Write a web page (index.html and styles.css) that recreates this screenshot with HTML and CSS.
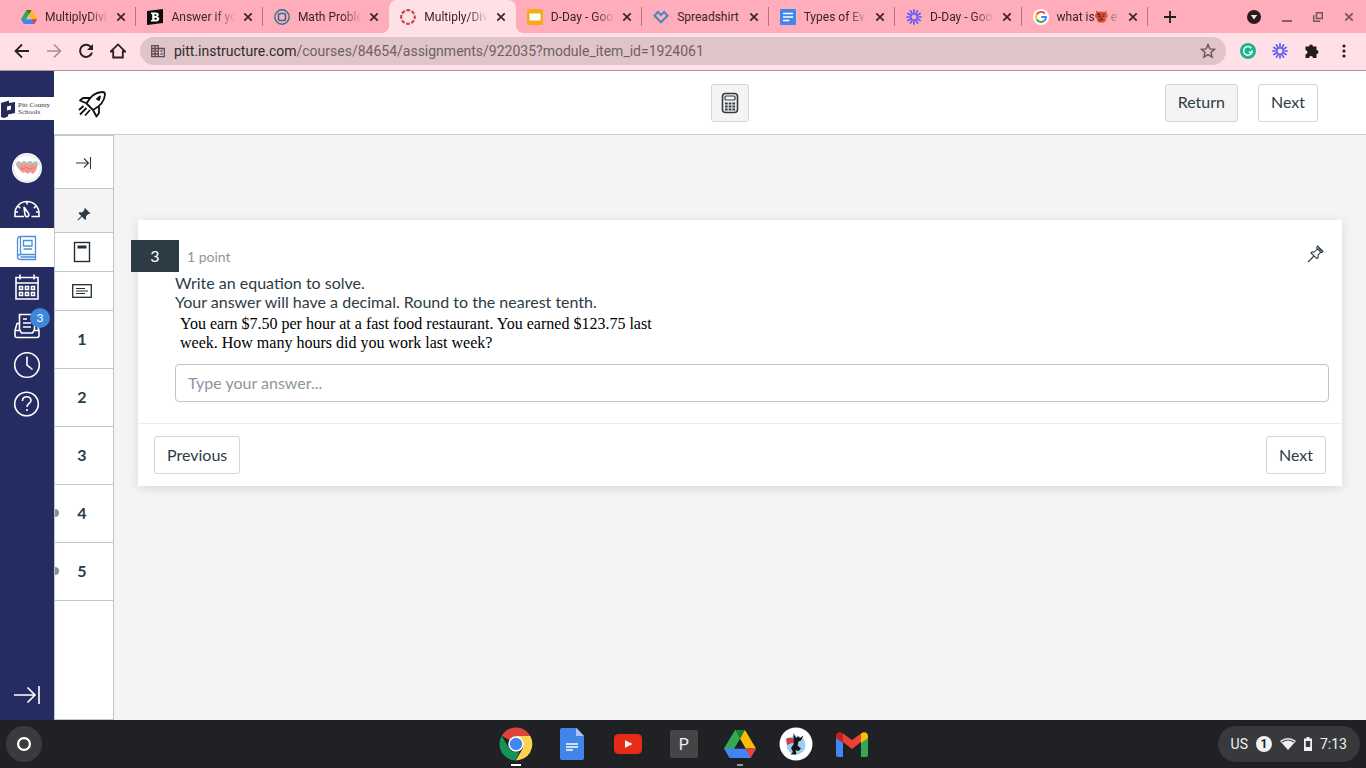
FILE: index.html
```html
<!DOCTYPE html>
<html lang="en">

<head>
    <meta charset="UTF-8">
    <meta name="viewport" content="width=device-width, initial-scale=1.0">
    <title>Multiply/Divide</title>
    <link rel="stylesheet" href="styles.css">
</head>

<body>

    <!-- shared shapes -->
    <svg class="defs" width="0" height="0" aria-hidden="true">
        <symbol id="close" viewBox="0 0 10 10"><path d="M1.3 1.3l7.4 7.4M8.7 1.3L1.3 8.7" stroke="currentColor" stroke-width="1.7"/></symbol>
        <symbol id="drive" viewBox="0 0 32 28">
            <path d="M11 0h10l-5 9-9.5 16.500L0 18.500z" fill="#34a853"/>
            <path d="M11 0h10l11 18.500H21.500z" fill="#fbbc04"/>
            <path d="M11 0h10l-5 9z" fill="#188038"/>
            <path d="M5.500 28l5-9.500H32L26.500 28z" fill="#4285f4"/>
            <path d="M0 18.500L5.500 28l5.200-9.500z" fill="#4285f4"/>
            <path d="M21.500 18.500H32L26.500 28z" fill="#ea4335"/>
            <path d="M16 9l5.500 9.500h-11z" fill="var(--hole)"/>
        </symbol>
        <symbol id="burst" viewBox="0 0 16 16">
            <g stroke="#6259f5" stroke-width="1.7" stroke-linecap="round">
                <path d="M8 .9v4M8 11.100v4M.9 8h4M11.100 8h4M4.450 1.850l2 3.460M9.550 10.690l2 3.460M1.850 4.450l3.460 2M10.690 9.550l3.460 2M1.850 11.550l3.460-2M10.690 6.450l3.460-2M4.450 14.150l2-3.460M9.550 5.310l2-3.460"/>
            </g>
        </symbol>
    </svg>

    <header class="browser">
        <div class="tab-strip">
            <div class="tabs">
                <div class="tab">
                    <svg class="favicon" viewBox="0 0 32 32"><use href="#drive" y="2" width="32" height="28"/></svg>
                    <span class="tab-title">MultiplyDivi</span>
                    <button class="tab-close" aria-label="Close tab"><svg><use href="#close"/></svg></button>
                </div>
                <div class="tab">
                    <svg class="favicon" viewBox="0 0 16 16"><path d="M0 2l16-2v14L0 16z" fill="#0b0b0b"/><path d="M4 3.500h5c3.400 0 3.600 3.600 1.200 4.100 3.100.6 2.700 4.900-.9 4.900H4v-1.600h1.200V5.100H4zm3.500 1.700v1.900h1c1.400 0 1.400-1.900 0-1.900zm0 3.500v2.100h1.200c1.500 0 1.500-2.100 0-2.100z" fill="#fff" fill-rule="evenodd"/></svg>
                    <span class="tab-title">Answer if yo</span>
                    <button class="tab-close" aria-label="Close tab"><svg><use href="#close"/></svg></button>
                </div>
                <div class="tab">
                    <svg class="favicon" viewBox="0 0 16 16" fill="none" stroke="#2f6f91"><circle cx="8" cy="8" r="7.2" stroke-width="1.4"/><rect x="4.5" y="4.5" width="7" height="7" rx="1.5" stroke-width="1.6"/></svg>
                    <span class="tab-title">Math Proble</span>
                    <button class="tab-close" aria-label="Close tab"><svg><use href="#close"/></svg></button>
                </div>
                <div class="tab active">
                    <svg class="favicon" viewBox="0 0 16 16"><circle cx="8" cy="8" r="6.8" fill="none" stroke="#c0464b" stroke-width="2.2" stroke-dasharray="3.8 1.54" stroke-dashoffset="1.9"/></svg>
                    <span class="tab-title">Multiply/Div</span>
                    <button class="tab-close" aria-label="Close tab"><svg><use href="#close"/></svg></button>
                </div>
                <div class="tab">
                    <svg class="favicon" viewBox="0 0 16 16"><rect width="16" height="16" rx="1.5" fill="#f5ab1b"/><rect x="2.5" y="4.5" width="11" height="7" fill="#fff"/></svg>
                    <span class="tab-title">D-Day - Goo</span>
                    <button class="tab-close" aria-label="Close tab"><svg><use href="#close"/></svg></button>
                </div>
                <div class="tab">
                    <svg class="favicon" viewBox="0 0 16 16"><path d="M8 13.300L1.500 6.800l3.400-3.900L8 6l3.100-3.100 3.400 3.900z" fill="none" stroke="#4a83bd" stroke-width="2"/></svg>
                    <span class="tab-title">Spreadshirt</span>
                    <button class="tab-close" aria-label="Close tab"><svg><use href="#close"/></svg></button>
                </div>
                <div class="tab">
                    <svg class="favicon" viewBox="0 0 16 16"><rect width="16" height="16" rx="1.5" fill="#4484ef"/><path d="M3 4.500h10M3 8h10M3 11.500h6.500" stroke="#fff" stroke-width="1.7"/></svg>
                    <span class="tab-title">Types of Ev</span>
                    <button class="tab-close" aria-label="Close tab"><svg><use href="#close"/></svg></button>
                </div>
                <div class="tab">
                    <svg class="favicon"><use href="#burst"/></svg>
                    <span class="tab-title">D-Day - Goo</span>
                    <button class="tab-close" aria-label="Close tab"><svg><use href="#close"/></svg></button>
                </div>
                <div class="tab">
                    <svg class="favicon" viewBox="0 0 16 16" fill="none" stroke-width="1.9"><circle cx="8" cy="8" r="8" fill="#fff"/><path d="M11.800 4.500A5 5 0 0 0 3.700 5.500" stroke="#ea4335"/><path d="M3.700 5.500a5 5 0 0 0 0 5" stroke="#fbbc05"/><path d="M3.700 10.500a5 5 0 0 0 7.500 1.300" stroke="#34a853"/><path d="M11.200 11.800A5 5 0 0 0 13 8H8.200" stroke="#4285f4"/></svg>
                    <span class="tab-title">what is<svg class="emoji" viewBox="0 0 14 14"><path d="M1 1l2.500 1h7L13 1l-.5 3 1.500 1v2.500L12.500 8l-1 4-2 1.500h-5l-2-1.500-1-4L0 7.500V5l1.500-1z" fill="#cf4a34"/><path d="M2.500 4l3 1.200M11.500 4l-3 1.200M4.500 10.500h5M3.800 6.800h1.800M8.400 6.800h1.800M6 8.500h2" stroke="#5c1a12" stroke-width="1.3"/></svg> e</span>
                    <button class="tab-close" aria-label="Close tab"><svg><use href="#close"/></svg></button>
                </div>
            </div>
            <div class="window-controls">
                <button aria-label="New tab"><svg width="12" height="12" viewBox="0 0 12 12"><path d="M6 0v12M0 6h12" stroke="#241c1e" stroke-width="1.8"/></svg></button>
                <div class="window-buttons">
                    <button aria-label="Search tabs"><svg width="14" height="14" viewBox="0 0 14 14"><circle cx="7" cy="7" r="7" fill="#2a1b1f"/><path d="M3.800 5h6.400L7 9.500z" fill="#ffdfe4"/></svg></button>
                    <button aria-label="Minimize"><svg width="10" height="10" viewBox="0 0 10 10"><path d="M0 9h10" stroke="#76565b" stroke-width="1.8"/></svg></button>
                    <button aria-label="Restore"><svg width="10" height="10" viewBox="0 0 10 10" fill="none" stroke="#76565b" stroke-width="1.5"><path d="M3.500.7h5.800v5.800H3.500zM.7 3v6.300H7"/></svg></button>
                    <button class="window-close" aria-label="Close window"><svg width="10" height="10"><use href="#close"/></svg></button>
                </div>
            </div>
        </div>
        <div class="toolbar">
            <div class="history">
                <button aria-label="Back"><svg width="16" height="16" viewBox="0 0 16 16" fill="none" stroke="#2a2023" stroke-width="1.8"><path d="M15 8H2M8 1.500L1.500 8 8 14.500"/></svg></button>
                <button aria-label="Forward"><svg width="16" height="16" viewBox="0 0 16 16" fill="none" stroke="#a58c92" stroke-width="1.6"><path d="M1 8h13M8 1.500L14.500 8 8 14.500"/></svg></button>
                <button aria-label="Reload"><svg width="16" height="16" viewBox="0 0 16 16"><path d="M13.300 4.500A6.100 6.100 0 1 0 14 9.500" fill="none" stroke="#2a2023" stroke-width="2"/><path d="M15 1v6H9z" fill="#2a2023"/></svg></button>
                <button aria-label="Home"><svg width="16" height="16" viewBox="0 0 16 16" fill="none" stroke="#2a2023" stroke-width="1.8"><path d="M.8 8.500L8 1.400l7.200 7.100h-2.400v6H3.200v-6z"/></svg></button>
            </div>
            <div class="address">
                <svg width="14" height="14" viewBox="0 0 14 14" fill="none" stroke="#5d4d51" stroke-width="1.3"><path d="M.7 1.700h6.600v11H.7zM7.300 4.500h6v8.200h-6M.7 4.500h6.600M.7 7.200h6.600M.7 10h6.600M4 1.700v11M9.500 7h2M9.500 10h2"/></svg>
                <label for="url">pitt.instructure.com</label><input id="url" type="text" value="/courses/84654/assignments/922035?module_item_id=1924061">
                <button aria-label="Bookmark this page"><svg width="16" height="16" viewBox="0 0 16 16"><path d="M8 1.500l1.900 4.400 4.700.4-3.600 3.100 1.100 4.700L8 11.600l-4.100 2.500L5 9.400 1.400 6.300l4.700-.4z" fill="none" stroke="#66555a" stroke-width="1.4"/></svg></button>
            </div>
            <div class="extensions">
                <button aria-label="Grammar checker"><svg width="16" height="16" viewBox="0 0 16 16"><circle cx="8" cy="8" r="8" fill="#1cb58b"/><path d="M11.300 5.200A4.300 4.300 0 1 0 12 9.300H8.800M12 7.200v2.600" fill="none" stroke="#fff" stroke-width="1.5"/></svg></button>
                <button aria-label="Screen recorder"><svg width="16" height="16"><use href="#burst"/></svg></button>
                <button aria-label="Extensions"><svg width="16" height="16" viewBox="0 0 16 16"><path d="M1.500 3.500H5a2 2 0 1 1 4 0h3.500V7a2 2 0 1 1 0 4v4H9a2 2 0 0 0-4 0H1.500v-3.800a2 2 0 0 0 0-4z" fill="#241c1e"/></svg></button>
                <button aria-label="Menu"><svg width="16" height="16" viewBox="0 0 16 16" fill="#241c1e"><circle cx="8" cy="3" r="1.6"/><circle cx="8" cy="8" r="1.6"/><circle cx="8" cy="13" r="1.6"/></svg></button>
            </div>
        </div>
    </header>

    <div class="app">
        <nav class="global-nav">
            <a class="school-logo" href="#">
                <svg width="16" height="18" viewBox="0 0 16 18"><path d="M1 3l8-2.500V3l6-1v11l-7 1.500v2L4 18l-3-1z" fill="#252b52"/><path d="M7 6.500l4-1v4l-4 1z" fill="#fff"/></svg>
                <span>Pitt County<br>Schools</span>
            </a>
            <a class="avatar-link" href="#" aria-label="Account">
                <svg width="32" height="32" viewBox="0 0 32 32"><circle cx="16" cy="16" r="15" fill="#fff"/><circle cx="16" cy="16" r="13.5" fill="none" stroke="#dde0ea"/><path d="M5 12c0-3 4-4 5-1 2-3 5-2 6 0 1-2 4-3 6 0 1-3 5-2 5 1 0 3-3 5-5 7H10c-2-2-5-4-5-7z" fill="#b9bdb5"/><path d="M8 15c0-3 3-3 4-1 1-2 4-2 5 0 1-2 4-2 5 0 1-2 4-2 4 1 0 3-2 5-4 7l-3-2-2 2-3-2-2 1c-2-2-4-3-4-6z" fill="#f4948d"/><path d="M10 16l3 1 2-2 3 2 4-1" fill="none" stroke="#e8746e"/></svg>
            </a>
            <a class="nav-item" href="#" aria-label="Dashboard">
                <svg width="28" height="20" viewBox="0 0 28 20"><path d="M11 17.500H2v-3a12 12 0 0 1 24 0v3h-7.500M14 2.500v3M5 7l2.200 2.200M23 7l-2.200 2.200M2.500 13H5M23 13h2.500"/><path d="M11 8l4.500 6.500c1.500 3-2.500 4.500-3.500 1.500z"/></svg>
            </a>
            <a class="nav-item current" href="#" aria-label="Courses">
                <svg width="22" height="26" viewBox="0 0 22 26"><path d="M4.500 1.500h15v18h-15c-4 0-4 5 0 5h15v-5M4.500 1.500C2.500 1.500 1.500 3 1.500 5v17M4.500 1.500v18M7.500 5.500H16V11H7.500zM7.500 14H16M4.500 22H19"/></svg>
            </a>
            <a class="nav-item" href="#" aria-label="Calendar">
                <svg width="26" height="28" viewBox="0 0 26 28"><path d="M2 4.500h22v21.500H2zM2 10h22M6 1.500v5M20 1.500v5M5.500 13.500h3v3h-3zM11.500 13.500h3v3h-3zM17.500 13.500h3v3h-3zM5.500 19.500h3v3h-3zM11.500 19.500h3v3h-3zM17.500 19.500h3v3h-3z"/></svg>
            </a>
            <a class="nav-item" href="#" aria-label="Inbox">
                <svg width="28" height="26" viewBox="0 0 28 26"><path d="M6.500 17V1.500h15V17M10 6h4M10 10h8M10 14h8M6.500 10.500H4L2 17.500v5c0 1.500.5 2 2 2h20c1.500 0 2-.5 2-2v-5l-2-7h-2.500M2 17.500h5l1.500 2.500h11l1.500-2.500h5"/></svg>
                <span class="badge">3</span>
            </a>
            <a class="nav-item" href="#" aria-label="History">
                <svg width="28" height="28" viewBox="0 0 28 28"><circle cx="14" cy="14" r="12.3"/><path d="M14 5.500V14l5.500 4.500"/></svg>
            </a>
            <a class="nav-item" href="#" aria-label="Help">
                <svg width="28" height="28" viewBox="0 0 28 28"><circle cx="13.5" cy="14" r="11.8"/><path d="M9.500 11c0-5.500 8.500-5.500 8.500-.5 0 3-4 3-4 6.500M14 19v2"/></svg>
            </a>
            <button class="nav-item nav-toggle" aria-label="Expand navigation">
                <svg width="28" height="20" viewBox="0 0 28 20"><path d="M1 10h21M14.500 2.500L22 10l-7.500 7.500M26 1v18"/></svg>
            </button>
        </nav>

        <div class="quiz">
            <div class="quiz-header">
                <svg class="rocket" width="30" height="30" viewBox="0 0 30 30" fill="none" stroke="#111" stroke-width="1.8" stroke-linejoin="round"><path d="M9.500 15.500C13 9 19 4 25.500 4c2 0 2.500.5 2.500 2.500-.5 6.500-5.500 12-12 15.500zM14 10H6l-3 2.500 7 3M22 17.500V25l-2.500 3.500L16 22M6.500 18L2 22M9.500 20L3 26.500M13 22l-5 5.500"/><path d="M20 11l3-2.500-1 3.500z" fill="#111"/></svg>
                <button class="btn btn-muted btn-icon" aria-label="Calculator">
                    <svg width="18" height="22" viewBox="0 0 18 22" fill="none" stroke="#2d3b45"><rect x="1.5" y="1.5" width="15" height="19" rx="3" stroke-width="1.6"/><rect x="4" y="4" width="10" height="4" rx="1" stroke-width="1.2"/><path d="M4 11.500h2.700M7.700 11.500h2.700M11.400 11.500h2.700M4 14.500h2.700M7.700 14.500h2.700M11.400 14.500h2.700M4 17.500h2.700M7.700 17.500h2.700M11.400 17.500h2.700" stroke-width="2"/></svg>
                </button>
                <div class="quiz-actions">
                    <button class="btn btn-muted">Return</button>
                    <button class="btn">Next</button>
                </div>
            </div>

            <div class="quiz-body">
                <div class="question-nav">
                    <button class="cell cell-toggle" aria-label="Collapse"><svg width="16" height="12" viewBox="0 0 16 12" fill="none" stroke="#2d3b45" stroke-width="1.1"><path d="M0 6h12M8 1.500L12.500 6 8 10.500M14.500 0v12"/></svg></button>
                    <button class="cell cell-pinned" aria-label="Pinned questions"><svg width="14" height="14" viewBox="0 0 14 14" fill="#2d3b45"><path d="M8 1l5.500 5.500-1.300.5-.8-.3L9 9.300l.1 2.700-.9.900L5 9.700 1.200 13.500.5 12.800 4.300 9 1.500 6.200l.9-.9 2.700.1L7.500 3l-.3-1z"/></svg></button>
                    <button class="cell cell-icon" aria-label="Instructions"><svg width="18" height="22" viewBox="0 0 18 22" fill="none" stroke="#222d35"><rect x="1.5" y="1.5" width="15" height="19" stroke-width="1.4"/><path d="M4.500 6h9" stroke-width="3"/></svg></button>
                    <button class="cell cell-icon" aria-label="Passage"><svg width="20" height="14" viewBox="0 0 20 14" fill="none" stroke="#222d35"><rect x=".7" y=".7" width="18.6" height="12.6" stroke-width="1.3"/><path d="M4 4.500h9M4 7h12M4 9.500h9" stroke-width="1.1"/></svg></button>
                    <button class="cell cell-number">1</button>
                    <button class="cell cell-number">2</button>
                    <button class="cell cell-number">3</button>
                    <button class="cell cell-number unanswered">4</button>
                    <button class="cell cell-number unanswered">5</button>
                </div>

                <main class="content">
                    <section class="card">
                        <div class="card-head">
                            <span class="question-number">3</span>
                            <span class="points">1 point</span>
                            <button class="pin" aria-label="Pin question"><svg width="18" height="18" viewBox="0 0 18 18" fill="none" stroke="#2d3b45" stroke-width="1.1" stroke-linejoin="round"><path d="M11.500 1l5.500 5.500-1.200 1-1-.3-2.800 3 .2 2.300-1.200 1.200L5 8l1.200-1.200 2.300.2 2.700-3-.4-1.500zM10.800 3.500l4 3.700M12.500 3l3.300 3M8 11l-6 6"/></svg></button>
                        </div>
                        <div class="card-body">
                            <p class="prompt">Write an equation to solve.<br>Your answer will have a decimal. Round to the nearest tenth.</p>
                            <label class="problem" for="answer">You earn $7.50 per hour at a fast food restaurant. You earned $123.75 last<br>week. How many hours did you work last week?</label>
                            <input class="answer" id="answer" type="text" placeholder="Type your answer...">
                        </div>
                        <div class="card-foot">
                            <button class="btn">Previous</button>
                            <button class="btn">Next</button>
                        </div>
                    </section>
                </main>
            </div>
        </div>
    </div>

    <footer class="shelf">
        <button class="launcher" aria-label="Launcher"><svg width="14" height="14" viewBox="0 0 14 14"><circle cx="7" cy="7" r="5.9" fill="none" stroke="#fff" stroke-width="2.2"/></svg></button>
        <div class="apps">
            <button class="running focused" aria-label="Chrome">
                <svg width="34" height="34" viewBox="0 0 34 34"><path d="M17 17L2.700 8.700A16.500 16.500 0 0 1 31.300 9z" fill="#db4437"/><path d="M17 9h14.300a16.500 16.500 0 0 1-14.500 24.500L24 21z" fill="#fdd250"/><path d="M2.700 8.700L10 21c2 4 6 5 10.500 4l-4 8.500A16.500 16.500 0 0 1 2.700 8.700z" fill="#149355"/><circle cx="17" cy="17" r="7.7" fill="#fff"/><circle cx="17" cy="17" r="6.2" fill="#4286f5"/></svg>
            </button>
            <button aria-label="Docs">
                <svg width="24" height="32" viewBox="0 0 24 32"><path d="M2 0h15l7 8v22a2 2 0 0 1-2 2H2a2 2 0 0 1-2-2V2a2 2 0 0 1 2-2z" fill="#4285e8"/><path d="M16 0l8 8h-8z" fill="#a9c7f8"/><path d="M6 16h12M6 19h12M6 22h7" stroke="#fff" stroke-width="1.4"/></svg>
            </button>
            <button aria-label="YouTube">
                <svg width="28" height="20" viewBox="0 0 28 20"><rect width="28" height="20" rx="4.5" fill="#e62c17"/><path d="M11 6.300l7.500 3.700L11 13.700z" fill="#fff"/></svg>
            </button>
            <button class="letter-app">P</button>
            <button class="running" aria-label="Drive"><svg class="drive-icon" width="32" height="30" viewBox="0 0 32 28"><use href="#drive" width="32" height="28"/></svg></button>
            <button aria-label="Kami">
                <svg width="34" height="34" viewBox="0 0 34 34"><circle cx="17" cy="17" r="16.5" fill="#fff"/><circle cx="17" cy="18" r="9.5" fill="#9dcdec"/><path d="M7 12c3-2 5-1 8 0l4 2-1 4-5-2-5 2z" fill="#c94049"/><path d="M14.500 6l2.500 5 2-1.500 2 1.500 3.500-2.500-2.500 5-2.500 1-1 4 3.500 3-2.500 2.500-3-1 1 4.500h-6l2.500-2.500-2-4 3-4.500-.5-5z" fill="#151515"/></svg>
            </button>
            <button aria-label="Gmail">
                <svg width="34" height="26" viewBox="0 0 34 26"><path d="M1 6l7 5v15H3a2 2 0 0 1-2-2z" fill="#4285f4"/><path d="M26 11l7-5v18a2 2 0 0 1-2 2h-5z" fill="#34a853"/><path d="M8 2.500L17 9l9-6.500V11l-9 7-9-7z" fill="#ea4335"/><path d="M1 5c0-4 4-5 7-2.500V12L1 7z" fill="#c5221f"/><path d="M33 5c0-4-4-5-7-2.500V12l7-5z" fill="#fbbc04"/></svg>
            </button>
        </div>
        <button class="status">
            <span class="locale">US</span>
            <span class="count">1</span>
            <svg width="16" height="12" viewBox="0 0 16 12"><path d="M0 3q8-6 16 0L8 12z" fill="#f1f1f1"/><path d="M2 4q6-4 12 0" stroke="#3a3c3f" fill="none" stroke-width="1.2"/></svg>
            <svg width="8" height="14" viewBox="0 0 8 14"><path d="M2.500 0h3v1.500H8V14H0V1.500h2.500zM1.800 4v6h4.400V4z" fill="#f1f1f1" fill-rule="evenodd"/></svg>
            <span>7:13</span>
        </button>
    </footer>

</body>

</html>
```
FILE: styles.css
```css
* {
    box-sizing: border-box;
}

body {
    margin: 0;
    height: 100vh;
    display: flex;
    flex-direction: column;
    font-family: Lato, sans-serif;
    font-size: 16px;
    color: #2d3b45;
    overflow: hidden;
}

button {
    border: none;
    background: none;
    padding: 0;
    margin: 0;
    font: inherit;
    color: inherit;
    cursor: pointer;
    display: flex;
    align-items: center;
    justify-content: center;
}

svg {
    display: block;
    flex-shrink: 0;
}

.defs {
    position: absolute;
}

/* Browser chrome */
.browser {
    font-family: Roboto, sans-serif;
    flex-shrink: 0;
}

.tab-strip {
    display: flex;
    height: 33px;
    background-color: #ffadba;
}

.tabs {
    display: flex;
    flex: 1;
    min-width: 0;
    padding-left: 10px;
}

.tab {
    --hole: #ffadba;
    position: relative;
    display: flex;
    flex: 1;
    min-width: 0;
    align-items: center;
    gap: 8px;
    padding: 0 10px 0 11px;
    font-size: 12px;
    color: #3b2429;
}

.tab::after {
    content: "";
    position: absolute;
    right: 0;
    top: 7px;
    width: 1px;
    height: 19px;
    background-color: #b9707c;
}

.tab.active {
    background-color: #ffe0e6;
    border-radius: 8px 8px 0 0;
}

.tab:has(+ .active)::after {
    display: none;
}

/* flared bottom corners of the selected tab */
.tab.active::before,
.tab.active::after {
    content: "";
    position: absolute;
    top: auto;
    bottom: 0;
    width: 8px;
    height: 8px;
}

.tab.active::before {
    left: -8px;
    background: radial-gradient(circle at 0 0, #ffadba 8px, #ffe0e6 8px);
}

.tab.active::after {
    right: -8px;
    background: radial-gradient(circle at 100% 0, #ffadba 8px, #ffe0e6 8px);
}

.favicon {
    width: 16px;
    height: 16px;
}

.tab-title {
    flex: 1;
    min-width: 0;
    overflow: hidden;
    white-space: nowrap;
    mask-image: linear-gradient(to right, #000 44px, transparent 64px);
}

.tab:nth-child(6) .tab-title {
    mask-image: none;
}

.emoji {
    display: inline-block;
    width: 13px;
    height: 13px;
    vertical-align: -2px;
}

.tab-close svg {
    width: 10px;
    height: 10px;
}

.window-controls {
    display: flex;
    width: 218px;
    padding: 0 12px 0 16px;
    justify-content: space-between;
}

.window-buttons {
    display: flex;
    gap: 21px;
}

.window-close {
    color: #76565b;
}

.toolbar {
    display: flex;
    align-items: center;
    height: 38px;
    padding: 0 14px 2px 14px;
    background-color: #ffe0e6;
    border-bottom: 1px solid #b58e98;
}

.history,
.extensions {
    display: flex;
    gap: 16px;
}

.address {
    display: flex;
    flex: 1;
    align-items: center;
    height: 28px;
    margin: 0 14px;
    padding: 0 10px 0 11px;
    border-radius: 14px;
    background-color: #dfc5ca;
    font-size: 14px;
}

.address label {
    margin-left: 9px;
    color: #33282b;
}

.address input {
    flex: 1;
    min-width: 0;
    border: none;
    padding: 0;
    background: none;
    font: inherit;
    color: #705f64;
    outline: none;
}

/* Canvas navigation */
.app {
    display: flex;
    flex: 1;
    min-height: 0;
}

.global-nav {
    display: flex;
    flex-direction: column;
    width: 54px;
    padding-top: 26px;
    background-color: #242c62;
}

.school-logo {
    display: flex;
    align-items: center;
    gap: 2px;
    height: 23px;
    background-color: #fff;
    color: #333748;
    font-family: "Liberation Serif", serif;
    font-size: 7px;
    line-height: 7px;
    text-decoration: none;
    white-space: nowrap;
}

.avatar-link {
    display: flex;
    justify-content: center;
    padding: 32px 0 5px;
}

.nav-item {
    position: relative;
    display: flex;
    align-items: center;
    justify-content: center;
    height: 39px;
}

.nav-item svg {
    fill: none;
    stroke: #fff;
    stroke-width: 1.6;
}

.nav-item.current {
    background-color: #fff;
}

.nav-item.current svg {
    stroke: #4a90d9;
    stroke-width: 1.3;
}

.badge {
    position: absolute;
    top: 2px;
    right: 4px;
    width: 20px;
    height: 20px;
    border-radius: 50%;
    background-color: #3f87d9;
    color: #fff;
    font-size: 12px;
    line-height: 20px;
    text-align: center;
}

.nav-toggle {
    margin-top: auto;
    margin-bottom: 6px;
}

/* Quiz */
.quiz {
    display: flex;
    flex: 1;
    flex-direction: column;
    min-width: 0;
}

.quiz-header {
    display: grid;
    grid-template-columns: 1fr auto 1fr;
    align-items: center;
    height: 64px;
    padding: 0 48px 0 23px;
    border-bottom: 1px solid #c7cdd1;
    background-color: #fff;
}

.quiz-header .btn-icon {
    margin-left: 64px;
}

.quiz-actions {
    display: flex;
    justify-content: flex-end;
    gap: 20px;
}

.btn {
    height: 38px;
    padding: 0 12px 2px;
    border: 1px solid #d3d5d7;
    border-radius: 3px;
    background-color: #fff;
    color: #2d3b45;
}

.btn-muted {
    background-color: #f4f4f4;
}

.btn-icon {
    width: 38px;
    padding: 0;
}

.quiz-body {
    display: flex;
    flex: 1;
    min-height: 0;
}

.question-nav {
    display: flex;
    flex-direction: column;
    width: 60px;
    border: 1px solid #c2c6c9;
    background-color: #fff;
}

.cell {
    position: relative;
    border-bottom: 1px solid #c2c6c9;
}

.cell-toggle {
    height: 53px;
    padding-top: 2px;
}

.cell-pinned {
    height: 44px;
    padding-top: 6px;
    background-color: #f4f4f4;
}

.cell-icon {
    height: 39px;
    padding-right: 4px;
}

.cell-number {
    height: 58px;
    padding: 0 4px 2px 0;
    font-weight: bold;
}

.unanswered {
    overflow: hidden;
}

.unanswered::before {
    content: "";
    position: absolute;
    left: -4px;
    top: 24px;
    width: 8px;
    height: 8px;
    border-radius: 50%;
    background-color: #8b8f92;
}

.content {
    flex: 1;
    min-width: 0;
    padding: 85px 24px 0;
    background-color: #f4f4f4;
}

.card {
    background-color: #fff;
    box-shadow: 0 2px 10px rgba(0, 0, 0, 0.12);
}

.card-head {
    display: flex;
    align-items: center;
    padding: 20px 18px 0 0;
}

.question-number {
    width: 48px;
    margin-left: -7px;
    background-color: #2d3b45;
    color: #fff;
    line-height: 32px;
    text-align: center;
}

.points {
    margin-left: 8px;
    font-size: 14px;
    color: #8b969e;
}

.pin {
    margin-left: auto;
    padding-bottom: 4px;
}

.card-body {
    padding: 1px 13px 21px 37px;
}

.prompt {
    margin: 0;
    line-height: 19px;
}

.problem {
    display: block;
    margin: 3px 5px 12px;
    font-family: "Liberation Serif", serif;
    line-height: 19px;
    color: #000;
}

.answer {
    display: block;
    width: 100%;
    height: 38px;
    padding: 0 12px 2px;
    border: 1px solid #c0c4c7;
    border-radius: 4px;
    font: inherit;
    color: #2d3b45;
}

.answer::placeholder {
    color: #8b969e;
}

.card-foot {
    display: flex;
    justify-content: space-between;
    padding: 12px 16px;
    border-top: 1px solid #ececec;
}

/* ChromeOS shelf */
.shelf {
    display: flex;
    align-items: center;
    justify-content: space-between;
    height: 48px;
    flex-shrink: 0;
    padding: 0 6px;
    background-color: #202124;
    color: #f1f1f1;
    font-family: Roboto, sans-serif;
}

.launcher {
    width: 36px;
    height: 36px;
    margin-right: 108px;
    border-radius: 50%;
    background-color: #393b3d;
}

.apps {
    display: flex;
    gap: 20px;
}

.apps button {
    position: relative;
    width: 36px;
    height: 48px;
}

.drive-icon {
    --hole: #202124;
}

.running::after {
    content: "";
    position: absolute;
    bottom: 2px;
    width: 6px;
    height: 2px;
    background-color: #86a08e;
}

.focused::after {
    width: 10px;
    background-color: #fff;
}

.apps .letter-app {
    width: 28px;
    height: 28px;
    margin: 10px 4px;
    border-radius: 2px;
    background-color: #444547;
}

.status {
    gap: 8px;
    height: 36px;
    padding: 0 13px;
    border-radius: 18px;
    background-color: #37393c;
    font-size: 14px;
}

.count {
    width: 16px;
    height: 16px;
    border-radius: 50%;
    background-color: #f1f1f1;
    color: #202124;
    font-size: 12px;
    font-weight: bold;
    line-height: 16px;
}
```
